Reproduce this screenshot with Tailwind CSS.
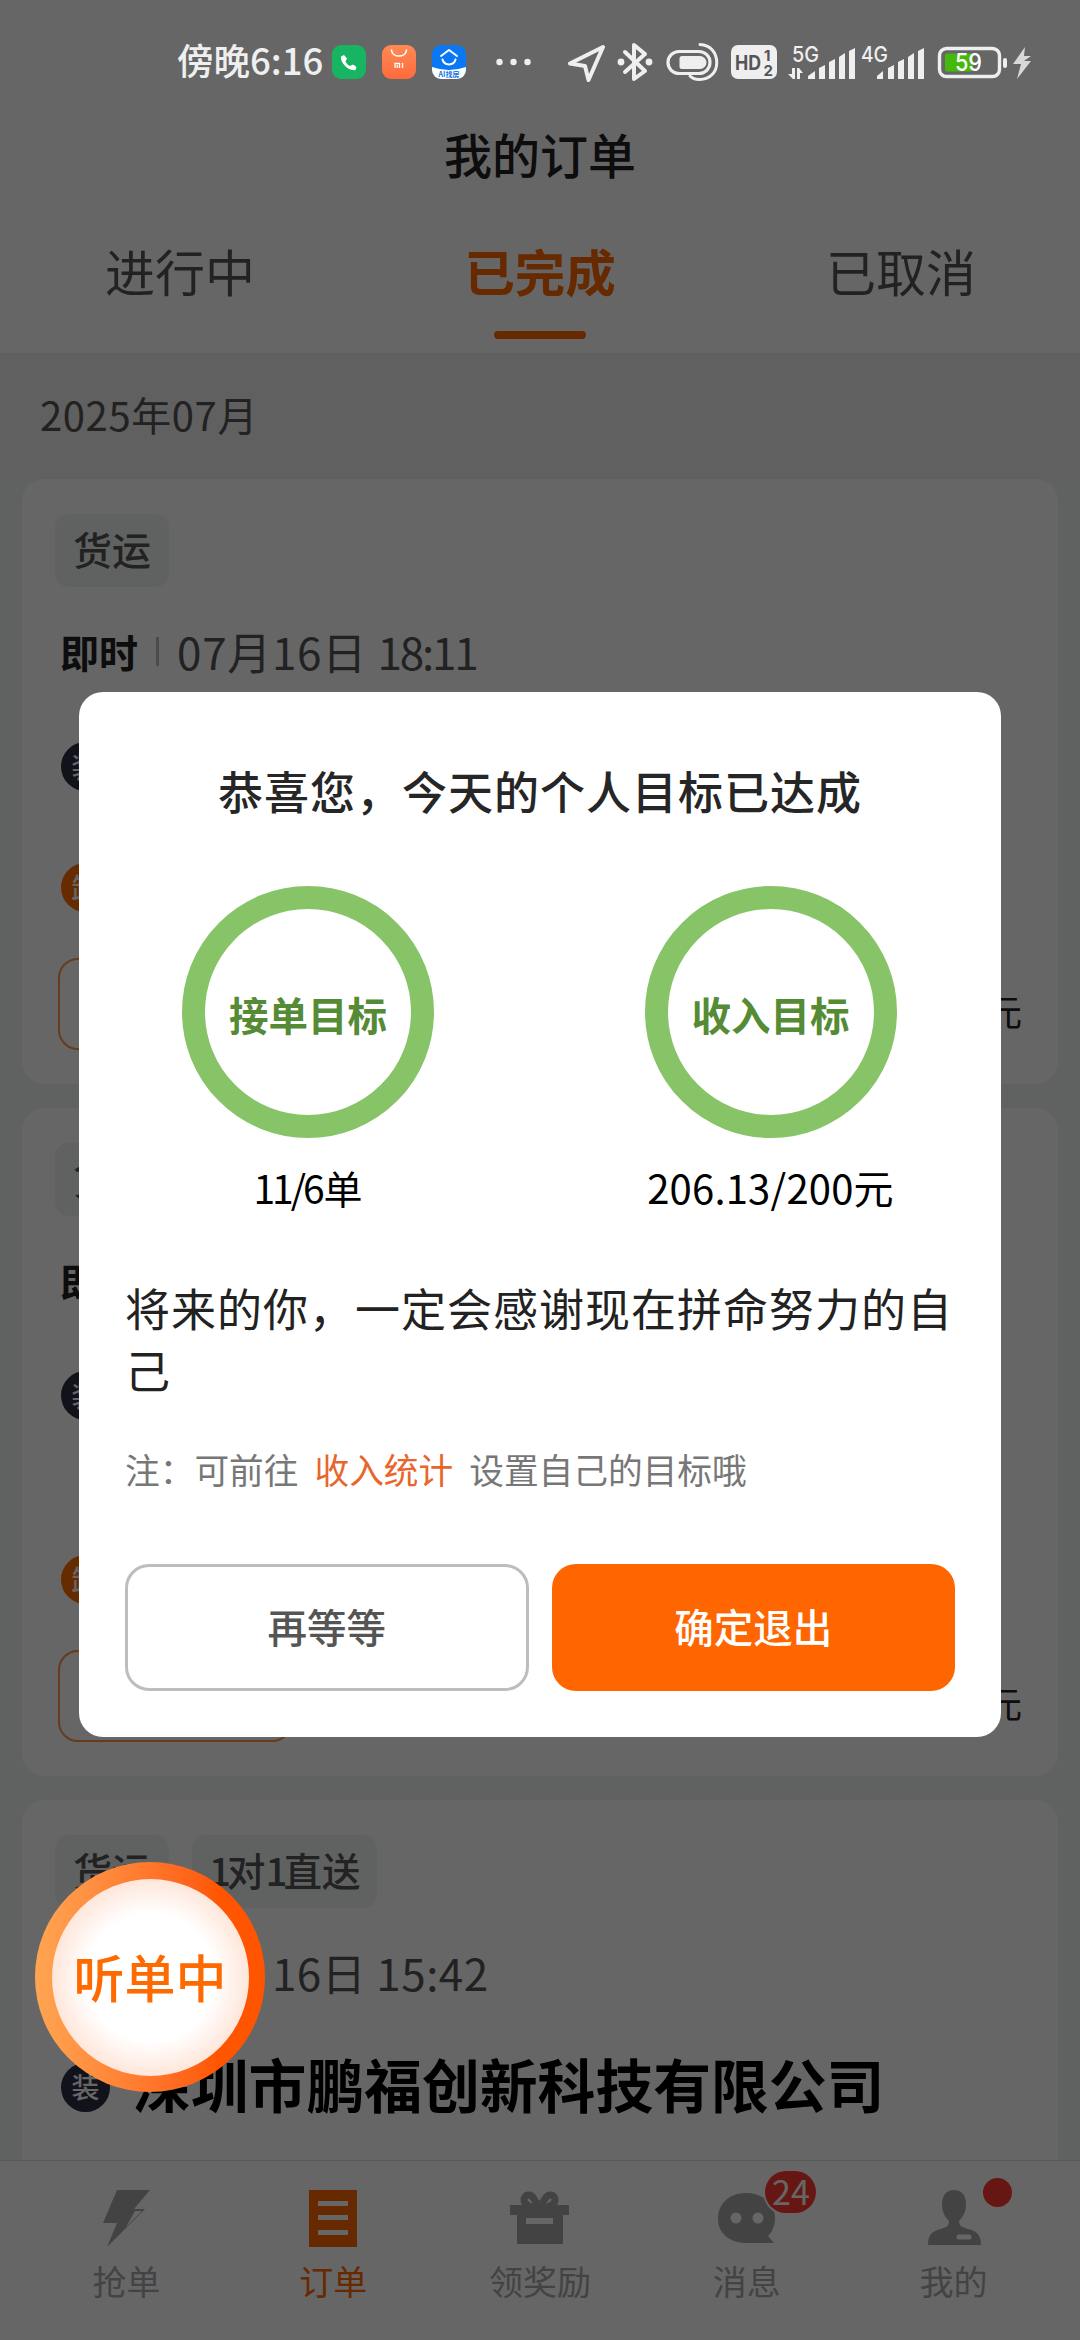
<!DOCTYPE html>
<html lang="zh-CN">
<head>
<meta charset="utf-8">
<title>我的订单</title>
<script src="https://cdn.jsdelivr.net/npm/@tailwindcss/browser@4"></script>
</head>
<body class="bg-white">
<div class="relative flex h-[2340px] w-[1080px] flex-col overflow-hidden bg-[#f1f4f3] font-['Noto_Sans_CJK_SC',sans-serif] leading-none whitespace-nowrap">

  <!-- Header and tabs -->
  <header class="flex h-[353px] shrink-0 flex-col bg-white pt-[124px]">
    <h1 class="flex h-[62px] items-center justify-center pb-[5px] text-[48px] font-medium text-[#222]">我的订单</h1>
    <nav class="grid h-[167px] grid-cols-3 text-[50px] text-[#555]">
      <div class="flex flex-col items-center pt-[59px]">进行中</div>
      <div class="flex flex-col items-center pt-[59px] font-bold text-[#ff6600]"><span class="text-[50.500px]">已完成</span><span class="mt-[35px] h-[8px] w-[92px] rounded-full bg-[#ff6600]"></span></div>
      <div class="flex flex-col items-center pt-[59px] pl-[2px]">已取消</div>
    </nav>
  </header>
  <div class="flex h-[126px] shrink-0 items-center bg-[#f0f0f0] pb-[4px] pl-[40px] text-[40px] tracking-[0.6px] text-[#555]">2025年07月</div>

  <!-- Order list -->
  <main class="flex h-[1681px] shrink-0 flex-col gap-[24px] overflow-hidden px-[22px]">
    <section class="flex h-[605px] shrink-0 flex-col rounded-[22px] bg-white pr-[36px] pl-[33px] pt-[35px]">
      <div class="flex"><span class="flex h-[73px] items-center rounded-[14px] bg-[#f0f4f3] px-[18px] pb-[5px] text-[39px] font-medium text-[#555]">货运</span></div>
      <div class="mt-[42px] flex h-[48px] items-center pb-[4px] pl-[5px]">
        <b class="text-[39px] text-[#222]">即时</b><span class="mx-[18px] h-[29px] w-[3px] bg-[#bbb]"></span>
        <span class="text-[44px] text-[#555]"><span class="tracking-[0.700px]">07月16日 </span><span class="tracking-[-2.200px]">18:11</span></span>
      </div>
      <span class="mt-[65px] ml-[6px] flex h-[49px] w-[49px] items-center justify-center rounded-full bg-[#2b2d42] pb-[2px] text-[28px] font-medium text-white">装</span>
      <span class="mt-[72px] ml-[6px] flex h-[49px] w-[49px] items-center justify-center rounded-full bg-[#ff6f00] pb-[2px] text-[28px] font-medium text-white">卸</span>
      <div class="mt-[46px] flex items-center justify-between pl-[3px]">
        <span class="h-[92px] w-[234px] rounded-[20px] border-2 border-[#ff6600]/70"></span>
        <span class="pt-[12px] text-[36px] text-[#222]">元</span>
      </div>
    </section>

    <section class="flex h-[668px] shrink-0 flex-col rounded-[22px] bg-white pr-[36px] pl-[33px] pt-[35px]">
      <div class="flex"><span class="flex h-[73px] items-center rounded-[14px] bg-[#f0f4f3] px-[18px] pb-[5px] text-[39px] font-medium text-[#555]">货运</span></div>
      <div class="mt-[42px] flex h-[48px] items-center pb-[4px] pl-[5px]">
        <b class="text-[39px] text-[#222]">即时</b>
      </div>
      <span class="mt-[65px] ml-[6px] flex h-[49px] w-[49px] items-center justify-center rounded-full bg-[#2b2d42] pb-[2px] text-[28px] font-medium text-white">装</span>
      <span class="mt-[135px] ml-[6px] flex h-[49px] w-[49px] items-center justify-center rounded-full bg-[#ff6f00] pb-[2px] text-[28px] font-medium text-white">卸</span>
      <div class="mt-[46px] flex items-center justify-between pl-[3px]">
        <span class="h-[92px] w-[234px] rounded-[20px] border-2 border-[#ff6600]/70"></span>
        <span class="pt-[12px] text-[36px] text-[#222]">元</span>
      </div>
    </section>

    <section class="flex h-[380px] shrink-0 flex-col rounded-t-[22px] bg-white px-[33px] pt-[35px]">
      <div class="flex gap-[23px]">
        <span class="flex h-[73px] items-center rounded-[14px] bg-[#f0f4f3] px-[18px] pb-[5px] text-[39px] font-medium text-[#555]">货运</span>
        <span class="flex h-[73px] items-center rounded-[14px] bg-[#f0f4f3] px-[17px] pb-[5px] text-[38.500px] font-medium text-[#555]"><span class="tracking-[-4px]">1</span>对<span class="tracking-[-4px]">1</span>直送</span>
      </div>
      <div class="mt-[42px] flex h-[48px] items-center pb-[4px] pl-[217px]">
        <span class="text-[44px] text-[#555]"><span class="tracking-[0.400px]">16日 </span><span class="tracking-[0.500px]">15:42</span></span>
      </div>
      <div class="mt-[57px] flex h-[64px] items-center gap-[23px] pl-[6px]">
        <span class="flex h-[49px] w-[49px] items-center justify-center rounded-full bg-[#2b2d42] pb-[2px] text-[28px] font-medium text-white">装</span>
        <b class="pb-[6px] text-[57.800px] text-black">深圳市鹏福创新科技有限公司</b>
      </div>
    </section>
  </main>

  <!-- Bottom navigation -->
  <footer class="grid h-[180px] shrink-0 grid-cols-5 border-t border-[#d8e0de] bg-white px-[23px] text-[34px] text-[#a8a8a8]">
    <div class="flex flex-col items-center pt-[26px]">
      <svg class="h-[62px] w-[62px] fill-[#a8a8a8]" viewBox="0 0 62 62"><path fill-rule="evenodd" d="M22 3H55L39 22H50L12 60L22 36H8ZM40 24 31 40 47 24Z"/></svg>
      <span class="mt-[15px]">抢单</span>
    </div>
    <div class="flex flex-col items-center pt-[26px] text-[#ff6600]">
      <svg class="h-[62px] w-[62px]" viewBox="0 0 62 62"><path fill="#ff6600" d="M7 3H55V60H7Z"/><path fill="#fff" d="M16 14H46V19H16ZM16 28H46V33H16ZM16 43H46V48H16Z"/></svg>
      <span class="mt-[15px]">订单</span>
    </div>
    <div class="flex flex-col items-center pt-[26px]">
      <svg class="h-[62px] w-[62px]" viewBox="0 0 62 62"><path fill="#a8a8a8" d="M1 18H60V28H54V57H8V28H1Z"/><path fill="none" stroke="#a8a8a8" stroke-width="7" d="M29 21C23 21 15 18 15 13C15 7 22 6 25 12L30 20L36 12C39 6 46 7 46 13C46 18 38 21 32 21"/><path fill="#fff" d="M17 31H44V37H17Z"/></svg>
      <span class="mt-[15px]">领奖励</span>
    </div>
    <div class="relative flex flex-col items-center pt-[26px]">
      <svg class="h-[62px] w-[62px]" viewBox="0 0 62 62"><path fill="#a8a8a8" d="M30 6C47 6 59 17 59 31C59 39 56 45 52 49L58 56H31C13 56 2 46 2 32C2 17 13 6 30 6Z"/><circle cx="20" cy="31" r="5.5" fill="#fff"/><circle cx="42" cy="31" r="5.5" fill="#fff"/></svg>
      <span class="mt-[15px]">消息</span>
      <span class="absolute top-[10px] left-[122px] flex h-[42px] w-[51px] items-center justify-center rounded-full bg-[#ff3a30] pb-[2px] text-[34px] text-white ring-2 ring-white">24</span>
    </div>
    <div class="relative flex flex-col items-center pt-[26px]">
      <svg class="h-[62px] w-[62px]" viewBox="0 0 62 62"><path fill="#a8a8a8" d="M31 3C39 3 43 9 43 17C43 25 40 30 36 34C36 39 39 40 45 42C54 44 58 48 58 58H5C5 48 9 44 18 42C24 40 26 39 26 34C22 30 19 25 19 17C19 9 23 3 31 3Z"/><path stroke="#fff" stroke-width="5" stroke-linecap="round" d="M36 50H46"/></svg>
      <span class="mt-[15px]">我的</span>
      <span class="absolute top-[17px] left-[133px] h-[29px] w-[29px] rounded-full bg-[#ff3a30]"></span>
    </div>
  </footer>

  <!-- Dimmed layer with status bar and dialog -->
  <div class="absolute inset-0 flex flex-col items-center bg-black/60">
    <div class="flex h-[124px] w-full shrink-0 items-center pl-[177px] text-[#efefef]">
      <span class="w-[155px] pb-[4px] text-[36.500px] font-medium">傍晚6:16</span>
      <svg class="h-[34px] w-[34px]" viewBox="0 0 34 34"><rect width="34" height="34" rx="9" fill="#17b462"/><path fill="#fff" d="M9 11.500L12 10L15 13.500L13.500 16.500C14.500 18.500 16 20 18 21L21 19.500L24.500 22L23.500 25C17 26.500 8 18 9 11.500Z"/></svg>
      <svg class="ml-[16px] h-[34px] w-[34px]" viewBox="0 0 34 34"><defs><linearGradient id="m" x2="0" y2="1"><stop stop-color="#ff8a55"/><stop offset="1" stop-color="#ff6a3c"/></linearGradient></defs><rect width="34" height="34" rx="9" fill="url(#m)"/><path fill="none" stroke="#fff" stroke-width="1.600" stroke-linecap="round" d="M9.500 5C10 13 24 13 24.500 5"/><path fill="none" stroke="#fff" stroke-width="1.300" d="M13 23V18.500H17.500V23M15.200 20V23M20.500 18V23"/></svg>
      <svg class="ml-[16px] h-[34px] w-[34px]" viewBox="0 0 34 34"><defs><clipPath id="c"><rect width="34" height="34" rx="9"/></clipPath></defs><g clip-path="url(#c)"><rect width="34" height="34" fill="#0a78f5"/><path fill="#fff" d="M0 22Q17 28 34 22V34H0Z"/><path fill="none" stroke="#fff" stroke-width="2" stroke-linecap="round" stroke-linejoin="round" d="M9 11L17 5L25 11M10.500 14.500C12 21 22 21 23.500 14.500"/></g><text x="17" y="32" text-anchor="middle" font-size="7" font-weight="700" fill="#1173e6">AI找房</text></svg>
      <svg class="ml-[30px] h-[34px] w-[40px] fill-[#efefef]" viewBox="0 0 40 34"><circle cx="3.500" cy="17" r="3.200"/><circle cx="17.500" cy="17" r="3.200"/><circle cx="31.500" cy="17" r="3.200"/></svg>
      <svg class="ml-[30px] h-[40px] w-[40px]" viewBox="0 0 40 40"><path fill="none" stroke="#efefef" stroke-width="4" stroke-linejoin="round" d="M37 5L4 21.500L19 24L22.500 38Z"/></svg>
      <svg class="ml-[11px] h-[40px] w-[36px]" viewBox="0 0 36 40"><path fill="none" stroke="#efefef" stroke-width="4" stroke-linecap="round" stroke-linejoin="round" d="M8 10L28 29L17 37V3L28 12L8 30"/><circle cx="4" cy="20" r="3.400" fill="#efefef"/><circle cx="32" cy="20" r="3.400" fill="#efefef"/></svg>
      <svg class="ml-[13px] h-[40px] w-[54px]" viewBox="0 0 54 40"><rect x="2" y="9.500" width="42" height="22" rx="11" fill="none" stroke="#efefef" stroke-width="3.200"/><path fill="#efefef" d="M16 14H34A6.500 6.500 0 0 1 34 27H16Q13.500 27 13.500 24.500V16.500Q13.500 14 16 14Z"/><path fill="none" stroke="#efefef" stroke-width="3" stroke-linecap="round" d="M34 2.500C56 3 57 38 33 37.500C29 37.500 26 36 24 34"/></svg>
      <svg class="ml-[11px] h-[34px] w-[46px] fill-[#555] font-['Inter',sans-serif] font-bold" viewBox="0 0 46 34"><rect width="46" height="34" rx="7" fill="#efefef"/><text x="4" y="24.500" font-size="20" textLength="26" lengthAdjust="spacingAndGlyphs">HD</text><text x="33" y="16" font-size="15">1</text><text x="32.500" y="30.500" font-size="15">2</text></svg>
      <svg class="ml-[11px] h-[40px] w-[68px] fill-[#efefef] font-['Inter',sans-serif] font-medium" viewBox="0 0 68 40"><text x="4" y="19.500" font-size="21" textLength="27" lengthAdjust="spacingAndGlyphs">5G</text><path d="M4 26H7V37H5L0 32H4ZM9 37V26H11L15 31H12V37ZM20 37V34L27 29V37ZM31 37V26L37 23V37ZM41 37V20L47 17V37ZM51 37V15L57 11V37ZM61 37V9L67 6V37Z"/></svg>
      <svg class="ml-[5px] h-[40px] w-[64px] fill-[#efefef] font-['Inter',sans-serif] font-medium" viewBox="0 0 64 40"><text x="0" y="19.500" font-size="21" textLength="27" lengthAdjust="spacingAndGlyphs">4G</text><path d="M16 37V34L22 29V37ZM27 37V26L33 23V37ZM37 37V20L43 17V37ZM47 37V15L53 11V37ZM57 37V9L63 6V37Z"/></svg>
      <svg class="ml-[12px] h-[40px] w-[96px] font-['Inter',sans-serif]" viewBox="0 0 96 40"><rect x="2.500" y="6.500" width="60" height="28" rx="7" fill="none" stroke="#efefef" stroke-width="3.400"/><rect x="8" y="11.500" width="28" height="18" rx="2" fill="#45b80c"/><rect x="66" y="16" width="4" height="10" rx="2" fill="#efefef"/><text x="31.500" y="29" text-anchor="middle" font-size="24" font-weight="500" textLength="27" lengthAdjust="spacingAndGlyphs" fill="#fff">59</text><path fill="#d8d8d8" d="M88 5L76 22H84L80 37L94 19H87L94 14H87Z"/></svg>
    </div>

    <div class="mt-[568px] flex h-[1045px] w-[922px] shrink-0 flex-col rounded-[24px] bg-white px-[46px] pt-[68px]">
      <h2 class="flex h-[60px] items-center justify-center text-[45px] font-medium tracking-[1px] text-[#262626]">恭喜您，今天的个人目标已达成</h2>
      <div class="-mx-[46px] mt-[66px] grid grid-cols-2">
        <div class="flex flex-col items-center pr-[3px]">
          <div class="flex h-[252px] w-[252px] items-center justify-center rounded-full border-[23px] border-[#87c367] pt-[4px] text-[39.5px] font-bold text-[#558b34]">接单目标</div>
          <div class="mt-[28px] flex h-[42px] items-center text-[39px]"><span class="tracking-[-3px]">11/6</span><span class="pl-[2px]">单</span></div>
        </div>
        <div class="flex flex-col items-center">
          <div class="flex h-[252px] w-[252px] items-center justify-center rounded-full border-[23px] border-[#87c367] pt-[4px] text-[39.5px] font-bold text-[#558b34]">收入目标</div>
          <div class="mt-[28px] flex h-[42px] items-center text-[40px] tracking-[0.200px]">206.13/200元</div>
        </div>
      </div>
      <p class="mt-[69px] text-[45px] leading-[62px] tracking-[1px] text-[#222]">将来的你，一定会感谢现在拼命努力的自<br>己</p>
      <p class="mt-[48px] flex h-[40px] items-center text-[34.700px] text-[#777]">注：可前往<span class="mx-[16px] text-[#e8662c]">收入统计</span>设置自己的目标哦</p>
      <div class="mt-[75px] grid grid-cols-2 gap-[23px] text-[39.5px] font-medium">
        <button class="h-[127px] rounded-[24px] border-[3px] border-[#bdbdbd] pb-[4px] text-[#555]">再等等</button>
        <button class="h-[127px] rounded-[24px] bg-[#ff6600] pb-[4px] text-white">确定退出</button>
      </div>
    </div>
  </div>

  <!-- Floating status button -->
  <div class="absolute top-[1862px] left-[35px] flex h-[230px] w-[230px] items-center justify-center rounded-full bg-linear-to-r from-[#ffa552] to-[#ff5500] to-80%">
    <div class="flex h-[197px] w-[197px] items-center justify-center rounded-full bg-[radial-gradient(circle_closest-side,#fff_65%,#ffe6da_100%)] pb-[2px] text-[51px] font-medium text-[#ff6a00]">听单中</div>
  </div>
</div>
</body>
</html>
